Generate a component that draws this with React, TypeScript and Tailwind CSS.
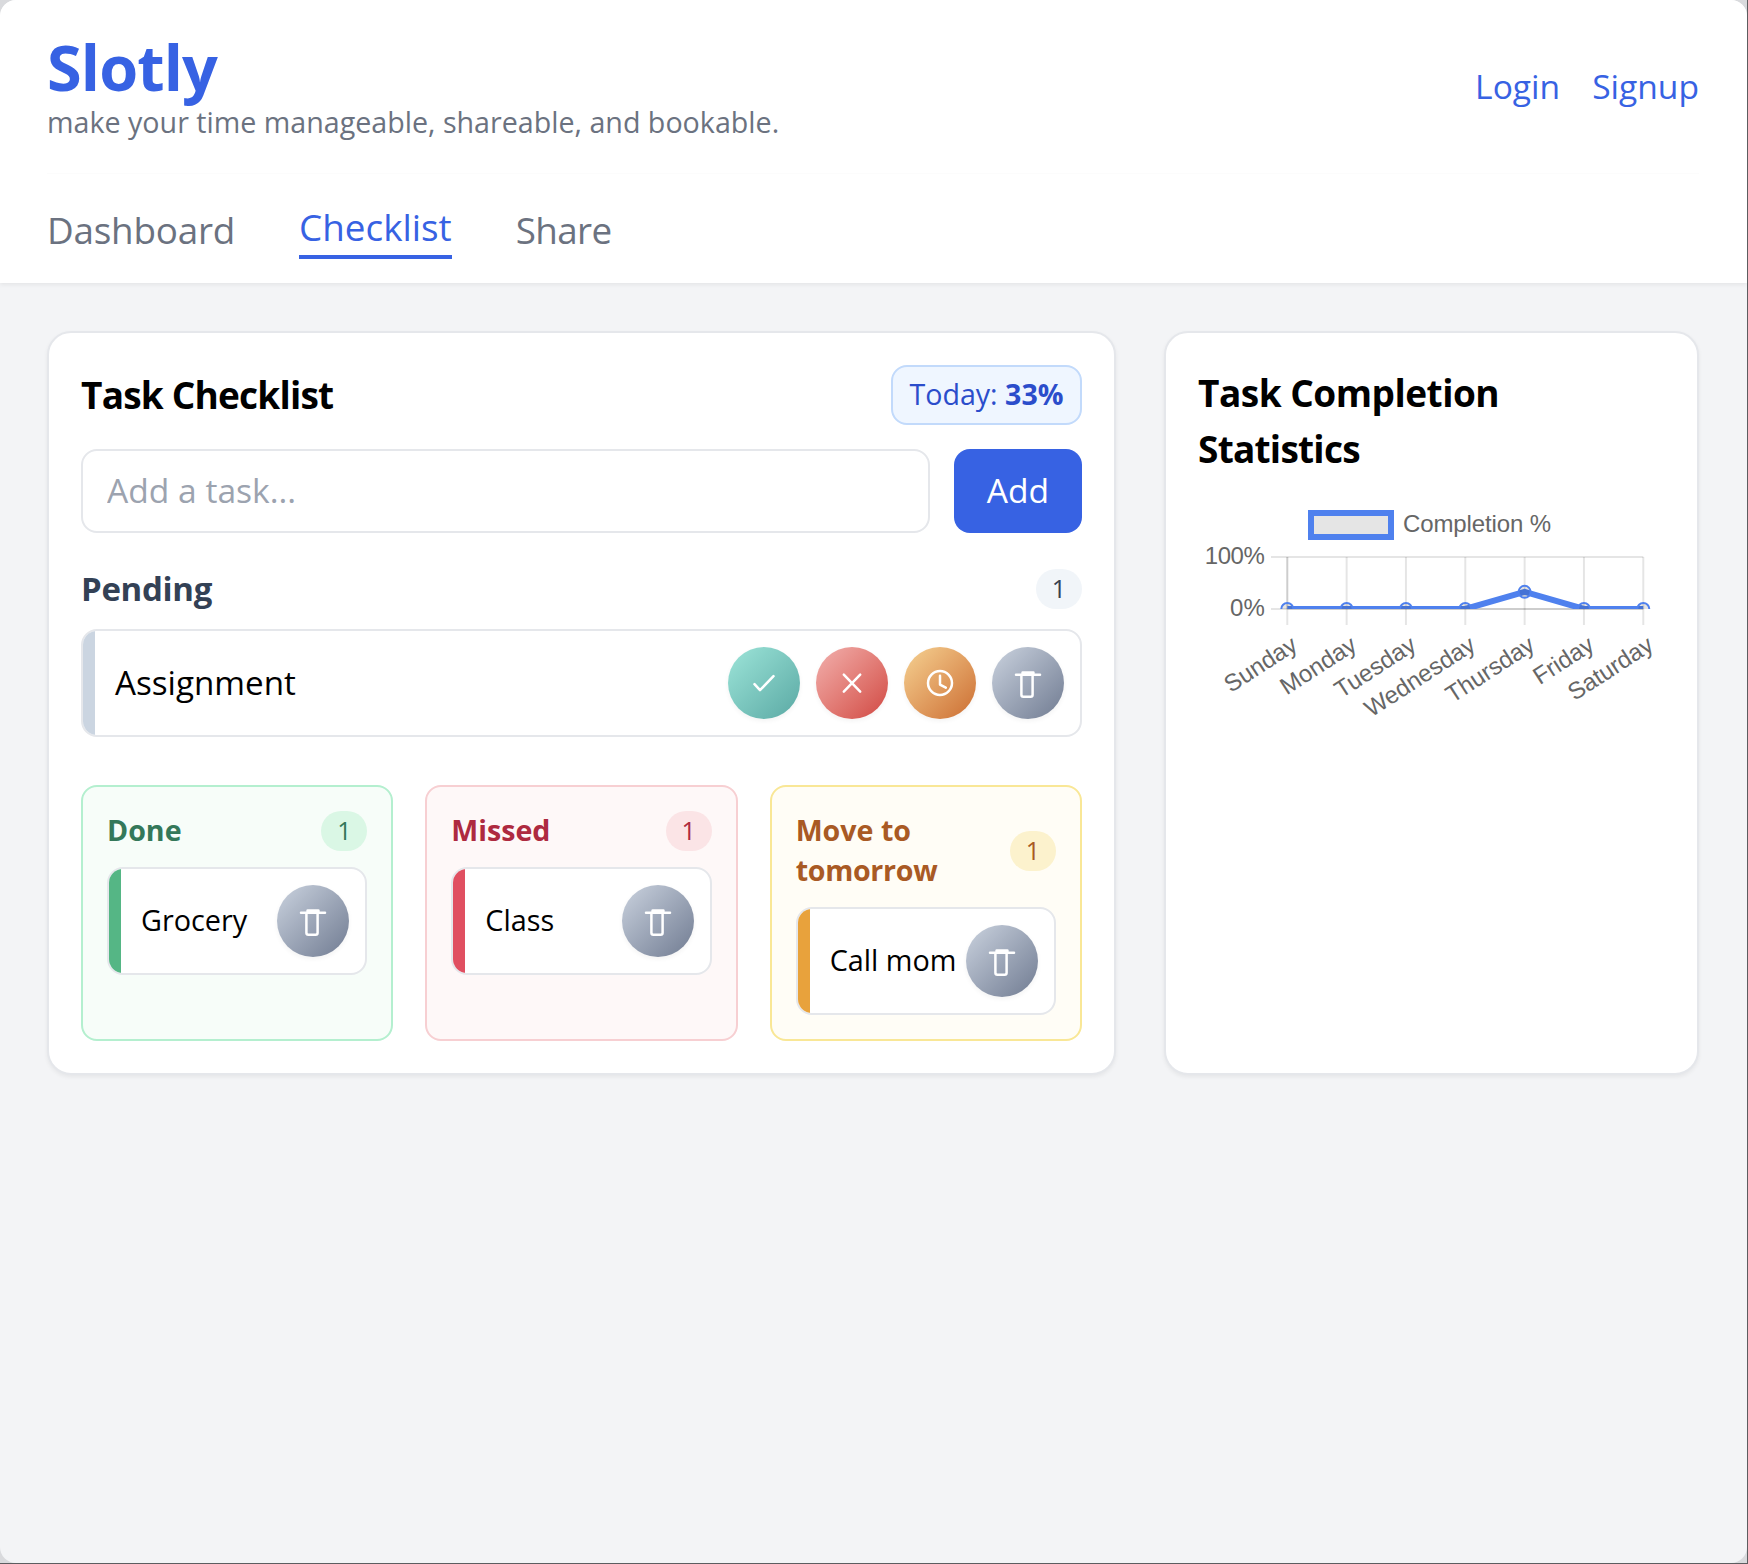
import React from "react";

const days = ["Sunday", "Monday", "Tuesday", "Wednesday", "Thursday", "Friday", "Saturday"];
const values = [0, 0, 0, 0, 33, 0, 0];
const LEFT = 89.3;
const STEP = 59.33;
const TOP = 57;
const BASE = 109;

const px = (i: number) => LEFT + i * STEP;
const py = (v: number) => BASE - ((BASE - TOP) * v) / 100;

function CompletionChart() {
  return (
    <svg width="466" height="232" viewBox="0 0 466 232" className="block font-['Liberation_Sans',sans-serif] text-[24px]">
      <defs>
        <clipPath id="plot">
          <rect x="80" y="40" width="385" height="69" />
        </clipPath>
      </defs>
      <rect x="113" y="13" width="80" height="24" fill="#e5e5e5" stroke="#4f81ee" strokeWidth="6" />
      <text x="205" y="32" fill="#666" textLength="148">Completion %</text>
      <text x="66.8" y="64" textAnchor="end" fill="#666" textLength="60">100%</text>
      <text x="66.8" y="116" textAnchor="end" fill="#666">0%</text>
      <g stroke="#000" strokeOpacity="0.1" strokeWidth="2">
        {days.map((d, i) => (
          <line key={d} x1={px(i)} x2={px(i)} y1={TOP} y2={BASE + 16} />
        ))}
        <line x1="73" x2={px(6)} y1={TOP} y2={TOP} />
        <line x1="73" x2={px(6)} y1={BASE} y2={BASE} />
        <line x1={LEFT} x2={LEFT} y1={TOP} y2={BASE} />
        <line x1={LEFT} x2={px(6)} y1={BASE} y2={BASE} />
      </g>
      <g clipPath="url(#plot)">
        <polyline points={values.map((v, i) => `${px(i)},${py(v)}`).join(" ")} fill="none" stroke="#4f81ee" strokeWidth="6" />
        {values.map((v, i) => (
          <circle key={i} cx={px(i)} cy={py(v)} r="6" fill="#000" fillOpacity="0.1" stroke="#4f81ee" strokeWidth="2" />
        ))}
      </g>
      {days.map((d, i) => (
        <text key={d} transform={`translate(${px(i) + 11.8} ${BASE + 40}) rotate(-33)`} textAnchor="end" fill="#666">
          {d}
        </text>
      ))}
    </svg>
  );
}

const icons = {
  check: <path d="M-9.5 1.2L-4 7.2L9.5 -6.8" />,
  cross: <path d="M-8.2 -8.4L8.2 8.6M8.2 -8.4L-8.2 8.6" />,
  clock: (
    <>
      <circle cx="0" cy="0" r="12" />
      <path d="M0 -7.2V1.6L5.8 4.6" />
    </>
  ),
  trash: (
    <>
      <path d="M-12 -8.2H12" />
      <path d="M-6.6 -8V11.7a2 2 0 0 0 2 2h7.2a2 2 0 0 0 2-2V-8" />
      <path d="M-5.4 -10.4H5.4V-8.6H-5.4Z" />
    </>
  ),
};

const tones = {
  check: "from-[#9de5d9] to-[#5aa9a4]",
  cross: "from-[#f1b0ae] to-[#d04642]",
  clock: "from-[#f5d292] to-[#cb6d30]",
  trash: "from-[#cbd3df] to-[#717c92]",
};

function RoundButton({ kind }: { kind: keyof typeof icons }) {
  return (
    <button
      aria-label={kind}
      className={`flex size-[72px] shrink-0 items-center justify-center rounded-full bg-linear-135 shadow-[0_2px_5px_rgba(0,0,0,0.05)] ${tones[kind]}`}
    >
      <svg width="36" height="36" viewBox="-18 -18 36 36" fill="none" stroke="#fff" strokeWidth="2.5" strokeLinecap="round" strokeLinejoin="round">
        {icons[kind]}
      </svg>
    </button>
  );
}

function Item({ name, stripe, text, kinds }: { name: string; stripe: string; text: string; kinds: (keyof typeof icons)[] }) {
  return (
    <div className="flex h-[108px] overflow-hidden rounded-[16px] border-2 border-[#e5e7eb] bg-white">
      <div className={`w-3 shrink-0 ${stripe}`} />
      <div className="flex min-w-0 flex-1 items-center justify-between pr-4 pl-5">
        <span className={`whitespace-nowrap text-black ${text}`}>{name}</span>
        <div className="flex gap-4">
          {kinds.map((k) => (
            <RoundButton key={k} kind={k} />
          ))}
        </div>
      </div>
    </div>
  );
}

function Count({ tone }: { tone: string }) {
  return <span className={`flex h-10 w-[46px] shrink-0 items-center justify-center rounded-full pb-px text-[25px] ${tone}`}>1</span>;
}

function Group(p: { title: React.ReactNode; box: string; head: string; badge: string; stripe: string; item: string }) {
  return (
    <section className={`rounded-[16px] border-2 p-6 ${p.box}`}>
      <div className="mb-4 flex items-center justify-between">
        <h3 className={`-translate-y-px text-[28.6px] leading-10 font-bold ${p.head}`}>{p.title}</h3>
        <Count tone={p.badge} />
      </div>
      <Item name={p.item} stripe={p.stripe} text="pb-0.5 text-[28.8px]" kinds={["trash"]} />
    </section>
  );
}

const card = "rounded-[24px] border-2 border-[#e5e7eb] bg-white p-8 shadow-[0_2px_4px_rgba(0,0,0,0.06)]";

export default function App() {
  return (
    <div className="h-[1564px] w-[1748px] border-r border-b border-[#5c5d60] bg-[#d9dadd] font-['Open_Sans','Noto_Sans',sans-serif]">
      <div className="h-full overflow-hidden rounded-[16px] bg-[#f3f4f6]">
        <header className="h-[283px] bg-white pr-12 pl-[47px] shadow-[0_2px_4px_rgba(0,0,0,0.06)]">
          <div className="flex h-[174px] items-center justify-between border-b border-[#fcfcfc]">
            <div className="self-start pt-[35px]">
              <h1 className="text-[63px] leading-[64px] font-bold tracking-[-0.9px] text-[#3762e3]">Slotly</h1>
              <p className="mt-[3px] text-[28.65px] leading-10 text-[#6b7280]">make your time manageable, shareable, and bookable.</p>
            </div>
            <div className="flex gap-8 pb-0.5 text-[33.6px] leading-[48px] text-[#3762e3]">
              <a>Login</a>
              <a>Signup</a>
            </div>
          </div>
          <nav className="flex items-center gap-16 pt-[26px] text-[36.8px] leading-[54px] text-[#6b7280]">
            <a className="tracking-[-0.2px]">Dashboard</a>
            <a className="border-b-4 border-[#3762e3] pb-px text-[#3762e3]">Checklist</a>
            <a className="tracking-[-0.6px]">Share</a>
          </nav>
        </header>
        <main className="grid grid-cols-[1069px_1fr] gap-12 py-12 pr-12 pl-[47px]">
          <section className={card}>
            <div className="mb-6 flex items-center justify-between">
              <h2 className="text-[37px] leading-[56px] font-bold tracking-[-0.8px] text-black">Task Checklist</h2>
              <div className="flex h-[60px] w-[191px] items-center justify-center rounded-[16px] border-2 border-[#c2dafb] bg-[#eff6ff] pb-0.5 text-[28.6px] whitespace-pre text-[#2b4dcb]">
                Today: <b>33%</b>
              </div>
            </div>
            <div className="mb-8 flex gap-6">
              <input
                placeholder="Add a task..."
                className="h-[84px] min-w-0 flex-1 rounded-[16px] border-2 border-[#e5e7eb] px-6 pb-0.5 text-[33.6px] placeholder:text-[#9ca3af]"
              />
              <button className="h-[84px] w-32 rounded-[16px] bg-[#3762e3] pb-0.5 text-[33.6px] text-white">Add</button>
            </div>
            <div className="mb-4 flex items-center justify-between">
              <h3 className="text-[33px] leading-[48px] font-bold tracking-[-0.3px] text-[#334155]">Pending</h3>
              <Count tone="bg-[#f1f5f9] text-[#374151]" />
            </div>
            <Item name="Assignment" stripe="bg-[#cbd5e1]" text="text-[33.2px]" kinds={["check", "cross", "clock", "trash"]} />
            <div className="mt-12 grid grid-cols-3 gap-8">
              <Group title="Done" item="Grocery" box="border-[#b4efcf] bg-[#f7fdf9]" head="text-[#34785a]" badge="bg-[#daf7e5] text-[#34785a]" stripe="bg-[#55b685]" />
              <Group title="Missed" item="Class" box="border-[#f7cfd2] bg-[#fef8f8]" head="text-[#ae2a40]" badge="bg-[#fbe4e6] text-[#ae2a40]" stripe="bg-[#e04f61]" />
              <Group title={<>Move to<br /><span className="tracking-[-0.3px]">tomorrow</span></>} item="Call mom" box="border-[#f9e796] bg-[#fffdf6]" head="text-[#a95a24]" badge="bg-[#fcf2cd] text-[#a95a24]" stripe="bg-[#e8a23c]" />
            </div>
          </section>
          <section className={card}>
            <h2 className="mb-[23px] text-[37px] leading-[56px] font-bold tracking-[-0.5px] text-black">
              Task Completion<br />
              <span className="tracking-[-0.75px]">Statistics</span>
            </h2>
            <CompletionChart />
          </section>
        </main>
      </div>
    </div>
  );
}
